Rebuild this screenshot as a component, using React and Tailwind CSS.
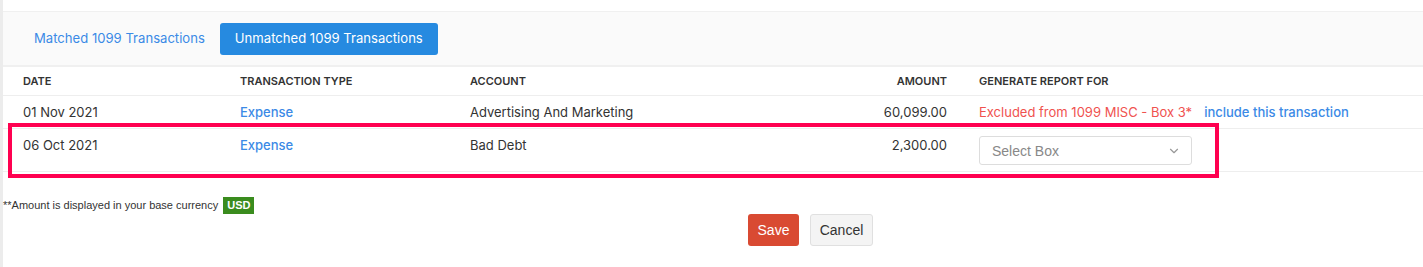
import { ChevronDown } from "lucide-react"

const rows = [
  { date: "01 Nov 2021", type: "Expense", account: "Advertising And Marketing", amount: "60,099.00" },
  { date: "06 Oct 2021", type: "Expense", account: "Bad Debt", amount: "2,300.00" },
]

function App() {
  return (
    <div className="relative flex h-[267px] w-full bg-white font-['Inter',sans-serif] text-[#333]">
      {/* left edge strip */}
      <div className="w-[3px] bg-[#ececec]" />

      <div className="flex-1">
        <div className="h-[11px]" />

        {/* TABS */}
        <div className="flex h-[56px] items-center border-t border-b-2 border-[#f0f0f0] bg-[#fafafa] pl-[17px]">
          <button className="h-[32px] px-[14px] text-[13.1px] text-[#3b8ae6]">Matched 1099 Transactions</button>
          <button className="ml-[1px] h-[32px] rounded-[3px] bg-[#268ae0] px-[15px] text-[13.1px] text-white">
            Unmatched 1099 Transactions
          </button>
        </div>

        {/* TABLE HEADER */}
        <div className="flex h-[29px] items-center border-b border-[#eeeeee] text-[11px] font-semibold uppercase text-[#333]">
          <div className="w-[237px] pl-[20px]">Date</div>
          <div className="w-[230px]">Transaction Type</div>
          <div className="w-[300px]">Account</div>
          <div className="w-[192px] pr-[15px] text-right">Amount</div>
          <div className="pl-[17px]">Generate Report For</div>
        </div>

        {/* ROW 1 */}
        <div className="flex h-[33px] items-center border-b border-[#eeeeee] pt-[2px] text-[13px]">
          <div className="w-[237px] pl-[20px]">{rows[0].date}</div>
          <div className="w-[230px] font-medium text-[#3b8ae6]">{rows[0].type}</div>
          <div className="w-[300px]">{rows[0].account}</div>
          <div className="w-[192px] pr-[15px] text-right">{rows[0].amount}</div>
          <div className="flex gap-[12px] pl-[17px]">
            <span className="text-[#f0524f]">Excluded from 1099 MISC - Box 3*</span>
            <span className="font-medium text-[#3b8ae6]">include this transaction</span>
          </div>
        </div>

        {/* ROW 2 */}
        <div className="flex h-[43px] items-start border-b border-[#eeeeee] pt-[8px] text-[13px] leading-[16px]">
          <div className="w-[237px] pl-[20px]">{rows[1].date}</div>
          <div className="w-[230px] font-medium text-[#3b8ae6]">{rows[1].type}</div>
          <div className="w-[300px]">{rows[1].account}</div>
          <div className="w-[192px] pr-[15px] text-right">{rows[1].amount}</div>
          <div className="pl-[17px]">
            <div className="mt-[-1px] flex h-[29px] w-[213px] items-center justify-between rounded-[3px] border border-[#dddddd] pl-[12px] pr-[10px] pt-[1px] font-['Liberation_Sans',sans-serif] text-[14px] text-[#888]">
              <span>Select Box</span>
              <ChevronDown size={14} strokeWidth={2} className="text-[#999]" />
            </div>
          </div>
        </div>

        {/* NOTE */}
        <div className="mt-[25px] flex items-center font-['Liberation_Sans',sans-serif] text-[11px] text-[#333]">
          <span>**Amount is displayed in your base currency</span>
          <span className="ml-[5px] flex h-[17px] items-center bg-[#3a8c1e] px-[4px] font-bold text-white">USD</span>
        </div>

        {/* ACTIONS */}
        <div className="flex gap-[11px] pl-[745px] font-['Liberation_Sans',sans-serif] text-[14px]">
          <button className="h-[32px] w-[51px] rounded-[3px] bg-[#d94a32] pt-[1px] text-white">Save</button>
          <button className="h-[32px] w-[63px] rounded-[3px] border border-[#e0e0e0] bg-[#f4f4f4] pt-[1px] text-[#333]">Cancel</button>
        </div>
      </div>

      {/* highlight annotation */}
      <div className="pointer-events-none absolute left-[8px] top-[123px] h-[55px] w-[1211px] border-4 border-[#ff0050]" />
    </div>
  )
}

export default App
